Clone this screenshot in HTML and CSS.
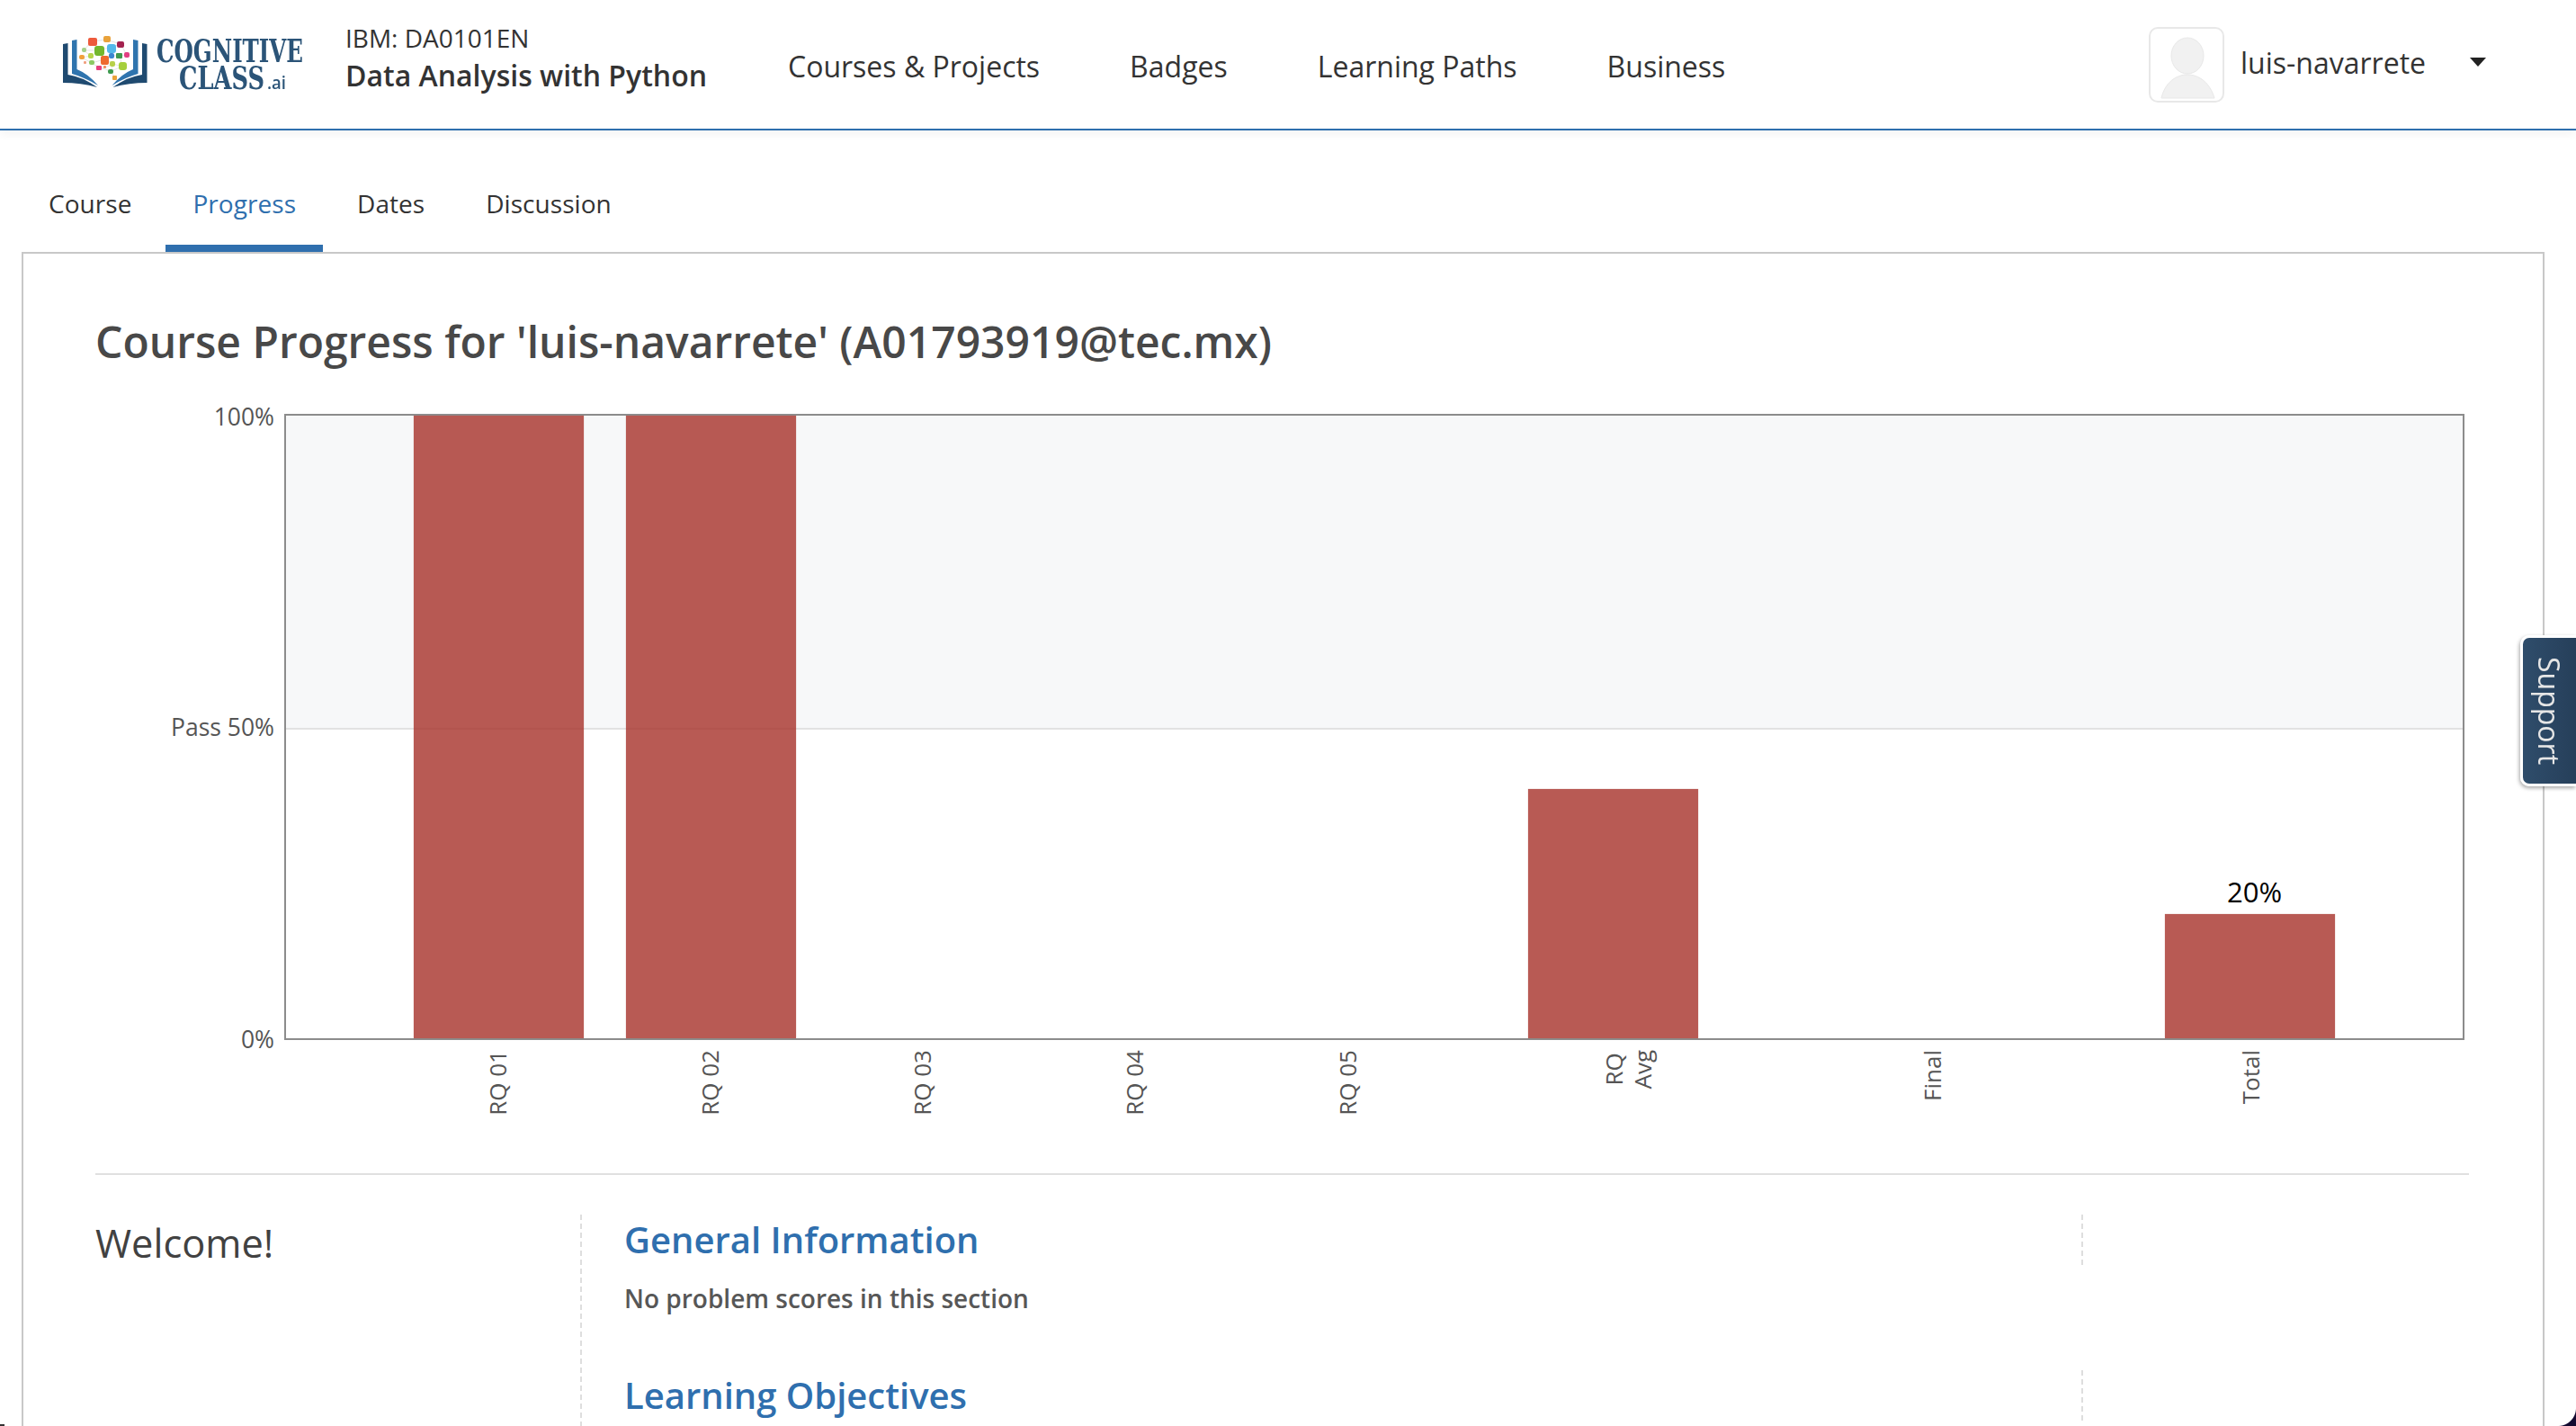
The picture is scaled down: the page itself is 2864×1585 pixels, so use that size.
FILE: index.html
```html
<!DOCTYPE html>
<html lang="en">
<head>
<meta charset="utf-8">
<title>Progress | Data Analysis with Python</title>
<link rel="stylesheet" href="styles.css">
</head>
<body>
<header class="site-header">
  <svg class="logo" viewBox="0 0 267 60" width="267" height="60" role="img" aria-label="Cognitive Class.ai">
    <g class="book">
      <path class="book-dark" d="M0 9 L5.5 8 L5.5 43 Q21 45 38 57 Q20 52 0 52 Z"/>
      <path class="book-blue" d="M10 5 L15.5 4 L15.5 37 Q28 42 39 55 Q24 46 10 42 Z"/>
    </g>
    <g class="book" transform="translate(93.5 0) scale(-1 1)">
      <path class="book-dark" d="M0 9 L5.5 8 L5.5 43 Q21 45 38 57 Q20 52 0 52 Z"/>
      <path class="book-blue" d="M10 5 L15.5 4 L15.5 37 Q28 42 39 55 Q24 46 10 42 Z"/>
    </g>
    <path class="links" d="M32 6 L48 4 L64 9 L54 12 L41 16 L23 16 L32 6 M23 16 L31 22 L21 24 L32 30 L46 26 L54 22 L63 22 L71 21 L64 9 M41 16 L46 26 L54 22 M46 26 L56 31 L66 34 L63 22 M32 30 L40 35 L47 35 L56 31 L53 39 L58 46 M40 35 L53 39 L66 34"/>
    <rect class="n" x="28" y="2" width="10" height="9" rx="2" fill="#ee5a3c"/>
    <rect class="n" x="45" y="0" width="8" height="7" rx="2" fill="#e9a23b"/>
    <rect class="n" x="60" y="6" width="8" height="7" rx="2" fill="#a3224f"/>
    <rect class="n" x="49" y="9" width="10" height="10" rx="3" fill="#53b8ea"/>
    <rect class="n" x="35" y="11" width="11" height="11" rx="3" fill="#73b72e"/>
    <rect class="n" x="21" y="13" width="5" height="5" rx="2" fill="#a4d08a"/>
    <rect class="n" x="28" y="19" width="6" height="6" rx="2" fill="#b6d44c"/>
    <rect class="n" x="18" y="21" width="6" height="5" rx="2" fill="#f0a03c"/>
    <rect class="n" x="42" y="22" width="9" height="10" rx="2" fill="#ee6a2f"/>
    <rect class="n" x="51" y="19" width="6" height="6" rx="2" fill="#3a86d0"/>
    <rect class="n" x="59" y="19" width="7" height="6" rx="1" fill="#3f9a4e"/>
    <rect class="n" x="68" y="18" width="6" height="6" rx="2" fill="#e23f82"/>
    <rect class="n" x="29" y="27" width="6" height="5" rx="2" fill="#8cc864"/>
    <rect class="n" x="23" y="28" width="3" height="3" rx="1" fill="#f0a080"/>
    <rect class="n" x="37" y="33" width="6" height="5" rx="1" fill="#e63f7e"/>
    <rect class="n" x="45" y="33" width="3" height="3" rx="1" fill="#f08a5a"/>
    <rect class="n" x="52" y="28" width="6" height="6" rx="2" fill="#b7d04a"/>
    <rect class="n" x="62" y="29" width="9" height="9" rx="3" fill="#a5cf3c"/>
    <rect class="n" x="50" y="37" width="6" height="5" rx="2" fill="#3d9a4e"/>
    <rect class="n" x="55" y="44" width="5" height="5" rx="1" fill="#e9a23b"/>
    <text class="logo-text" x="104" y="29" textLength="163" lengthAdjust="spacingAndGlyphs">COGNITIVE</text>
    <text class="logo-text" x="129" y="59" textLength="95" lengthAdjust="spacingAndGlyphs">CLASS</text>
    <text class="logo-ai" x="227" y="59" textLength="21" lengthAdjust="spacingAndGlyphs">.ai</text>
  </svg>
  <div class="course-title">
    <span class="course-code">IBM: DA0101EN</span>
    <span class="course-name">Data Analysis with Python</span>
  </div>
  <nav class="main-nav">
    <a class="nav-link">Courses &amp; Projects</a>
    <a class="nav-link">Badges</a>
    <a class="nav-link">Learning Paths</a>
    <a class="nav-link">Business</a>
  </nav>
  <div class="user-menu">
    <span class="avatar">
      <svg viewBox="0 0 80 79" width="80" height="79" aria-hidden="true">
        <ellipse class="avatar-fig" cx="41" cy="30" rx="18" ry="20"/>
        <path class="avatar-fig" d="M12 77 C16 60 28 51 41 51 C54 51 66 60 71 77 Z"/>
      </svg>
    </span>
    <span class="username">luis-navarrete</span>
    <span class="caret"></span>
  </div>
</header>

<nav class="tabs">
  <a class="tab">Course</a>
  <a class="tab tab-active">Progress</a>
  <a class="tab">Dates</a>
  <a class="tab">Discussion</a>
</nav>

<main class="content">
  <h1 class="page-title">Course Progress for 'luis-navarrete' (A01793919@tec.mx)</h1>
  <section class="chart">
    <div class="plot">
      <div class="pass-zone"></div>
      <span class="y-label y-top">100%</span>
      <span class="y-label y-pass">Pass 50%</span>
      <span class="y-label y-zero">0%</span>
      <div class="bar" style="left:142px;width:189px;height:692px"></div>
      <div class="bar" style="left:378px;width:189px;height:692px"></div>
      <div class="bar" style="left:1381px;width:189px;height:277px"></div>
      <div class="bar" style="left:2089px;width:189px;height:138px"><span class="bar-value">20%</span></div>
      <span class="x-label" style="left:235px">RQ 01</span>
      <span class="x-label" style="left:471px">RQ 02</span>
      <span class="x-label" style="left:707px">RQ 03</span>
      <span class="x-label" style="left:943px">RQ 04</span>
      <span class="x-label" style="left:1180px">RQ 05</span>
      <span class="x-label" style="left:1492px">RQ<br>Avg</span>
      <span class="x-label" style="left:1830px">Final</span>
      <span class="x-label" style="left:2184px">Total</span>
    </div>
  </section>
  <div class="details">
    <h2 class="welcome">Welcome!</h2>
    <div class="chapters">
      <section class="chapter">
        <div class="chapter-head">
          <h3 class="chapter-title">General Information</h3>
          <div class="grade-cell"></div>
        </div>
        <p class="no-scores">No problem scores in this section</p>
      </section>
      <section class="chapter">
        <div class="chapter-head">
          <h3 class="chapter-title">Learning Objectives</h3>
          <div class="grade-cell"></div>
        </div>
      </section>
    </div>
  </div>
</main>

<a class="support">Support</a>
<div class="window-corner corner-right"></div>
<div class="window-corner corner-left"></div>
</body>
</html>
```
FILE: styles.css
```css
* { box-sizing: border-box; }
html, body { height: 1585px; overflow: hidden; }
body {
  margin: 0;
  background: #fff;
  color: #333;
  font-family: "Open Sans", "Noto Sans", sans-serif;
}
h1, h2, h3, p { margin: 0; }

.site-header {
  display: flex;
  align-items: center;
  height: 145px;
  padding: 0 100px 0 70px;
  border-bottom: 2px solid #2f6fae;
  box-shadow: 0 4px 10px rgba(0, 0, 0, .05);
}
.logo { flex: none; margin-top: -4px; overflow: visible; filter: blur(.6px); }
.book-dark { fill: #1f4a70; }
.book-blue { fill: #2f74ae; }
.links { fill: none; stroke: #d8d8d8; stroke-width: .7; }
.logo-text { font-family: "DejaVu Serif", serif; font-weight: 700; font-size: 36px; fill: #2b5478; }
.logo-ai { font-family: "Open Sans", sans-serif; font-weight: 600; font-size: 19px; fill: #2b5478; }

.course-title {
  display: flex;
  flex-direction: column;
  margin: -18px 0 0 47px;
  white-space: nowrap;
}
.course-code { font-size: 28px; line-height: 42px; }
.course-name { font-size: 32px; line-height: 42px; font-weight: 600; }

.main-nav { display: flex; gap: 100px; margin: 4px 0 0 90px; }
.nav-link { font-size: 32px; line-height: 44px; color: #333; white-space: nowrap; }

.user-menu { display: flex; align-items: center; margin-left: auto; }
.avatar {
  display: block;
  width: 84px;
  height: 84px;
  border: 2px solid #e8e8e8;
  border-radius: 10px;
}
.avatar svg { display: block; }
.avatar-fig { fill: #f1f1f1; stroke: #e8e8e8; stroke-width: 1; }
.username { margin: -4px 0 0 18px; font-size: 32px; line-height: 44px; color: #333; }
.caret {
  margin: -6px 0 0 49px;
  border-style: solid;
  border-width: 10px 9px 0;
  border-color: #222 transparent transparent;
}

.tabs { display: flex; gap: 8px; height: 135px; padding: 62px 0 0 24px; }
.tab {
  height: 73px;
  padding: 0 30px;
  font-size: 28px;
  line-height: 38px;
  letter-spacing: .05px;
  color: #333;
}
.tab-active { color: #2f6fae; border-bottom: 8px solid #2f6fae; }

.content {
  width: 2805px;
  height: 1305px;
  margin-left: 24px;
  padding: 68px 82px 0 80px;
  border: 2px solid #c8c8c8;
  border-bottom: 0;
  overflow: hidden;
}
.page-title { font-size: 48px; line-height: 60px; font-weight: 600; color: #484848; white-space: nowrap; }

.chart {
  height: 844px;
  margin-top: 50px;
  padding-left: 210px;
  border-bottom: 2px solid #e0e0e0;
  box-sizing: content-box;
}
.plot {
  position: relative;
  width: 2424px;
  height: 696px;
  border: 2px solid #8c8c8c;
}
.pass-zone {
  height: 347px;
  background: #f7f8f9;
  border-bottom: 2px solid #e2e2e2;
  box-sizing: content-box;
}
.y-label {
  position: absolute;
  right: 100%;
  margin-right: 13px;
  font-size: 26.5px;
  line-height: 34px;
  color: #555;
  white-space: nowrap;
  transform: translateY(-50%);
}
.y-top { top: 1px; }
.y-pass { top: 346px; }
.y-zero { top: 693px; }
.bar {
  position: absolute;
  bottom: 0;
  background: rgba(166, 49, 41, .8);
  box-shadow: 0 0 1px rgba(184, 90, 84, .6);
}
.bar-value {
  position: absolute;
  left: calc(50% + 5px);
  bottom: 100%;
  margin-bottom: 5px;
  font-size: 31px;
  line-height: 40px;
  color: #000;
  transform: translateX(-50%);
}
.x-label {
  position: absolute;
  top: 705px;
  writing-mode: vertical-rl;
  font-size: 26px;
  line-height: 32px;
  color: #555;
  text-align: center;
  white-space: nowrap;
  transform: translateX(-50%) rotate(180deg);
}

.details { display: flex; margin-top: 44px; }
.welcome {
  width: 539px;
  flex: none;
  padding-top: 4px;
  font-size: 43.4px;
  line-height: 56px;
  font-weight: 400;
  color: #414141;
}
.chapters {
  flex: 1;
  height: 235px;
  padding-left: 49px;
  background: repeating-linear-gradient(to bottom, #dedede 0 6px, transparent 6px 10px) no-repeat left top / 2px 100%;
}
.chapter { height: 173px; }
.chapter:last-child { height: 56px; }
.chapter-head { display: flex; height: 56px; }
.chapter-title {
  width: 1620px;
  font-size: 40px;
  line-height: 56px;
  font-weight: 600;
  color: #2f6fae;
}
.grade-cell {
  width: 2px;
  height: 56px;
  background: repeating-linear-gradient(to bottom, #dedede 0 6px, transparent 6px 10px);
}
.no-scores {
  margin-top: 18px;
  font-size: 28px;
  line-height: 38px;
  font-weight: 600;
  color: #575757;
}

.support {
  position: fixed;
  right: 0;
  top: 706px;
  width: 62px;
  height: 168px;
  display: flex;
  align-items: center;
  justify-content: center;
  writing-mode: vertical-rl;
  font-size: 32px;
  color: #e6e6e6;
  background: linear-gradient(to right, #2f4d6b, #263f5a);
  border: 3px solid #fff;
  border-right: 0;
  border-radius: 10px 0 0 10px;
  box-shadow: -1px 2px 4px rgba(0, 0, 0, .35);
}

.window-corner { position: fixed; bottom: 0; }
.corner-right {
  right: 0;
  width: 20px;
  height: 20px;
  background: radial-gradient(circle at 0 0, transparent 19.5px, #120a30 20.5px);
}
.corner-left {
  left: 0;
  width: 5px;
  height: 2px;
  background: #333;
}
```
